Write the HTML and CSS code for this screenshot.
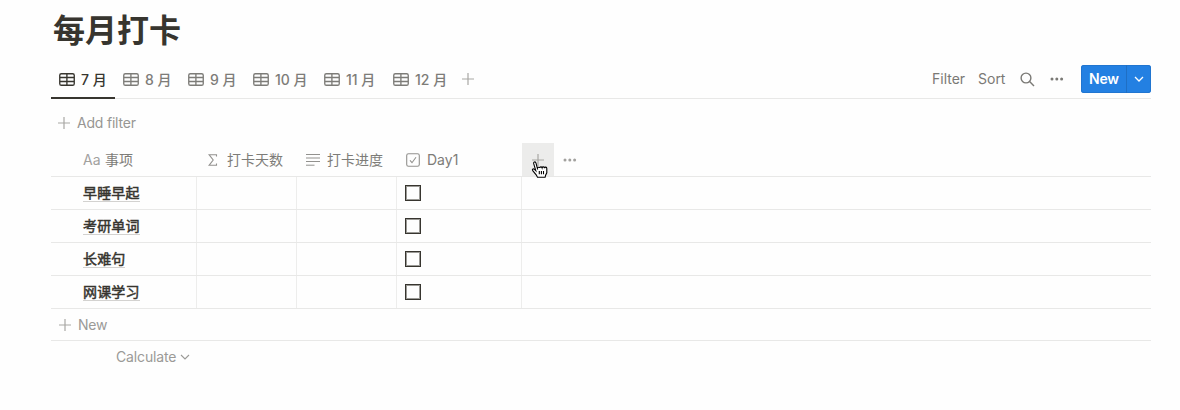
FILE: index.html
```
<!DOCTYPE html>
<html lang="zh-CN">
<head>
<meta charset="utf-8">
<title>每月打卡</title>
<link rel="stylesheet" href="styles.css">
</head>
<body>
<svg class="defs" width="0" height="0" aria-hidden="true">
  <symbol id="grid" viewBox="0 0 16 13"><rect x=".75" y=".75" width="14.5" height="11.5" rx="1.6"/><path d="M1 4.500h14M1 8.500h14M7.900 1v11"/></symbol>
  <symbol id="plus" viewBox="0 0 12 12"><path d="M6 0v12M0 6h12"/></symbol>
  <symbol id="chevron" viewBox="0 0 10 6"><path d="M1 1l4 4 4-4"/></symbol>
  <symbol id="dots" viewBox="0 0 14 4"><circle cx="2" cy="2" r="1.5"/><circle cx="6.8" cy="2" r="1.5"/><circle cx="11.600" cy="2" r="1.5"/></symbol>
</svg>
<main class="page">
  <h1 class="title">每月打卡</h1>
  <header class="bar">
    <nav class="tabs">
      <a class="tab active"><svg class="grid-icon"><use href="#grid"/></svg><span>7 月</span></a>
      <a class="tab"><svg class="grid-icon"><use href="#grid"/></svg><span>8 月</span></a>
      <a class="tab"><svg class="grid-icon"><use href="#grid"/></svg><span>9 月</span></a>
      <a class="tab wide"><svg class="grid-icon"><use href="#grid"/></svg><span>10 月</span></a>
      <a class="tab eleven"><svg class="grid-icon"><use href="#grid"/></svg><span>11 月</span></a>
      <a class="tab twelve"><svg class="grid-icon"><use href="#grid"/></svg><span>12 月</span></a>
      <svg class="plus tab-plus"><use href="#plus"/></svg>
    </nav>
    <div class="tools">
      <span class="filter">Filter</span>
      <span class="sort">Sort</span>
      <svg class="search" viewBox="0 0 15 15"><circle cx="6" cy="6" r="4.9"/><path d="M9.6 9.6l4.4 4.400"/></svg>
      <svg class="dots"><use href="#dots"/></svg>
      <div class="new-button"><span class="new-label">New</span><span class="new-more"><svg class="chevron"><use href="#chevron"/></svg></span></div>
    </div>
  </header>
  <div class="add-filter"><svg class="plus"><use href="#plus"/></svg><span>Add filter</span></div>
  <section class="table">
    <div class="row head">
      <div class="cell name"><span class="aa">Aa</span><span>事项</span></div>
      <div class="cell"><svg class="sigma" viewBox="0 0 10 12"><path d="M8.500 2.500V.7H1l4.200 5.300L1 11.300h7.500V9.500"/></svg><span>打卡天数</span></div>
      <div class="cell"><svg class="lines" viewBox="0 0 14 12"><path d="M0 .5h14M0 4h14M0 7.500h14M0 11.200h8.500"/></svg><span>打卡进度</span></div>
      <div class="cell day"><svg class="check" viewBox="0 0 14 14"><rect x=".7" y=".7" width="12.600" height="12.600" rx="1.800"/><path d="M4 7.300l2 2.400 4-5.500"/></svg><span>Day1</span></div>
      <div class="add-column">
        <svg class="plus"><use href="#plus"/></svg>
        <svg class="pointer" viewBox="0 0 16 18"><path d="M5.700 9.500L4 3.100C3.500 1.200 1.200 1.800 1.700 3.700l2.100 6.900-1.300-1.200C1 8.100-.3 9.400.9 10.800l3.300 4 1.300 2.500h7.600l.5-2 1.200-2.500V8.500c0-1.700-2-1.800-2.200-.4-.2-1.500-2.200-1.600-2.500-.3-.4-1.300-2.300-1.200-2.400.1-.4-1-1.900-.8-2.100.1"/><path d="M7.300 11v3.200M9.400 11v3.200M11.500 11v3.200"/></svg>
      </div>
      <svg class="dots head-dots"><use href="#dots"/></svg>
    </div>
    <div class="row"><div class="cell name"><b>早睡早起</b></div><div class="cell"></div><div class="cell"></div><div class="cell day"><i class="box"></i></div></div>
    <div class="row"><div class="cell name"><b>考研单词</b></div><div class="cell"></div><div class="cell"></div><div class="cell day"><i class="box"></i></div></div>
    <div class="row"><div class="cell name"><b>长难句</b></div><div class="cell"></div><div class="cell"></div><div class="cell day"><i class="box"></i></div></div>
    <div class="row"><div class="cell name"><b>网课学习</b></div><div class="cell"></div><div class="cell"></div><div class="cell day"><i class="box"></i></div></div>
    <div class="new-row"><svg class="plus"><use href="#plus"/></svg><span>New</span></div>
    <div class="calculate"><span>Calculate</span><svg class="chevron"><use href="#chevron"/></svg></div>
  </section>
</main>
</body>
</html>
```
FILE: styles.css
```
* { box-sizing: border-box; }
html, body { height: 100%; }
body {
  margin: 0;
  overflow: hidden;
  background: #fefefe;
  color: #37352f;
  font: 14px/20px Inter, "Noto Sans CJK SC", sans-serif;
}
svg { display: block; flex: none; fill: none; stroke: currentColor; }
.defs { position: absolute; }
.page { width: 1100px; margin-left: 51px; }
.title { margin: 0; height: 60px; padding: 10px 0 0 2px; font-size: 32px; line-height: 41px; font-weight: 700; }
.bar { display: flex; justify-content: space-between; height: 39px; border-bottom: 1px solid #e8e8e7; }
.tabs { display: flex; height: 39px; color: #7d7c78; font-weight: 500; }
.tab { display: flex; align-items: flex-start; gap: 6px; width: 65px; padding: 10px 0 0 8px; white-space: nowrap; }
.tab.active { width: 64px; color: #37352f; border-bottom: 2px solid #37352f; }
.tab.wide { width: 71px; }
.tab.eleven { width: 69px; }
.tab.twelve { width: 77px; }
.grid-icon { width: 16px; height: 13px; margin-top: 3px; stroke-width: 1.35; }
.plus { width: 12px; height: 12px; stroke-width: 1.2; color: #a8a7a4; }
.tab-plus { margin-top: 13px; }
.tools { display: flex; align-items: center; height: 38px; color: #7a7975; }
.filter { width: 46px; }
.sort { width: 42px; }
.search { width: 15px; height: 15px; margin-right: 15px; stroke-width: 1.4; }
.dots { width: 14px; height: 4px; fill: currentColor; stroke: none; }
.new-button { display: flex; width: 70px; height: 28px; margin-left: 17px; border-radius: 3px; background: #2380e2; color: #fff; box-shadow: inset 0 0 0 1px #2075d0; }
.new-label { width: 46px; padding: 4px 0 0 8px; border-right: 1px solid #1f6fc4; font-weight: 600; letter-spacing: -.2px; }
.new-more { display: flex; align-items: center; justify-content: center; flex: 1; }
.chevron { width: 10px; height: 6px; stroke-width: 1.3; }
.add-filter { display: flex; align-items: center; gap: 7px; height: 44px; padding: 4px 0 0 7px; color: #979693; letter-spacing: -.2px; }
.row { display: flex; height: 33px; border-bottom: 1px solid #e8e8e7; }
.cell { display: flex; align-items: center; width: 100px; border-right: 1px solid #ededec; }
.cell.name { width: 146px; padding-left: 32px; }
.cell.day { width: 125px; padding-left: 8px; }
.cell b { height: 18px; line-height: 17px; border-bottom: 1px solid #d3d2d0; font-weight: 400; letter-spacing: .15px; -webkit-text-stroke: .5px currentColor; }
.head { height: 34px; color: #7d7c78; }
.head .cell { border-color: transparent; }
.aa { width: 22px; color: #a2a19e; }
.sigma { width: 10px; height: 12px; margin: 0 9px 0 11px; stroke-width: 1.1; color: #92918e; }
.lines { width: 14px; height: 12px; margin: 0 7px 0 9px; stroke-width: 1; color: #92918e; }
.check { width: 14px; height: 14px; margin: 0 7px 0 1px; stroke-width: 1.1; color: #92918e; }
.add-column { position: relative; display: flex; align-items: center; justify-content: center; width: 32px; background: #ececeb; }
.pointer { position: absolute; left: 10px; top: 17px; width: 16px; height: 18px; fill: #fff; stroke: #000; stroke-width: 1.1; overflow: visible; }
.head-dots { align-self: center; margin-left: 9px; color: #a2a19e; }
.box { width: 16px; height: 16px; border: 1px solid #37352f; box-shadow: inset 0 0 0 1px #9b9a96; }
.new-row { display: flex; align-items: center; gap: 7px; height: 32px; padding-left: 8px; border-bottom: 1px solid #e8e8e7; color: #9b9a97; letter-spacing: -.2px; }
.calculate { display: flex; align-items: center; gap: 4px; height: 31px; padding-left: 65px; color: #9b9a97; letter-spacing: -.15px; }
.calculate .chevron { stroke-width: 1.1; }
```
